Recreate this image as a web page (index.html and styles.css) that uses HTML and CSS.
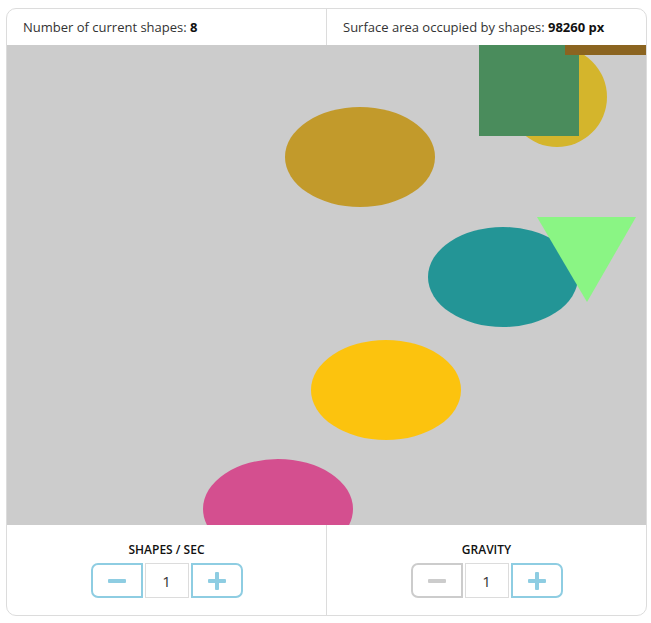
FILE: index.html
```html
<!DOCTYPE html>
<html>
<head>
<meta charset="utf-8">
<link rel="stylesheet" href="styles.css">
</head>
<body>
<div class="app">
  <div class="header">
    <div class="cell"><span>Number of current shapes: <b>8</b></span></div>
    <div class="cell"><span>Surface area occupied by shapes: <b>98260 px</b></span></div>
  </div>
  <div class="canvas">
    <svg width="640" height="480" viewBox="0 0 640 480">
      <rect width="640" height="480" fill="#cccccc"/>
      <circle cx="550" cy="52" r="50" fill="#d4b52c"/>
      <rect x="472" y="-9" width="100" height="100" fill="#4a8c5c"/>
      <rect x="558" y="0" width="82" height="10" fill="#8b6420"/>
      <ellipse cx="353" cy="112" rx="75" ry="50" fill="#c29a2b"/>
      <ellipse cx="496" cy="232" rx="75" ry="50" fill="#239596"/>
      <polygon points="530,172 629,172 580,257" fill="#8af584"/>
      <ellipse cx="379" cy="345" rx="75" ry="50" fill="#fcc30e"/>
      <ellipse cx="271" cy="464" rx="75" ry="50" fill="#d44f8f"/>
    </svg>
  </div>
  <div class="footer">
    <div class="control">
      <div class="label">SHAPES / SEC</div>
      <div class="stepper">
        <button class="btn minus"><span class="bar"></span></button>
        <div class="value">1</div>
        <button class="btn plus"><span class="bar"></span><span class="bar vert"></span></button>
      </div>
    </div>
    <div class="control">
      <div class="label">GRAVITY</div>
      <div class="stepper">
        <button class="btn minus disabled"><span class="bar"></span></button>
        <div class="value">1</div>
        <button class="btn plus"><span class="bar"></span><span class="bar vert"></span></button>
      </div>
    </div>
  </div>
</div>
</body>
</html>
```
FILE: styles.css
```css
* { box-sizing: border-box; }
body {
  margin: 0;
  padding: 8px 5px 0 6px;
  background: #fff;
  font-family: "Open Sans", "DejaVu Sans", sans-serif;
  color: #222;
}
.app {
  width: 641px;
  border: 1px solid #dcdcdc;
  border-radius: 10px;
  overflow: hidden;
}
.header {
  display: grid;
  grid-template-columns: 320px 1fr;
  height: 36px;
}
.header .cell {
  display: flex;
  align-items: center;
  padding-left: 16px;
  font-size: 13px;
  color: #333;
}
.header .cell:first-child { border-right: 1px solid #dcdcdc; }
.header b { color: #111; font-weight: 700; }
.canvas {
  height: 480px;
  line-height: 0;
}
.canvas svg { display: block; }
.footer {
  display: grid;
  grid-template-columns: 320px 1fr;
  height: 90px;
}
.control {
  display: flex;
  flex-direction: column;
  align-items: center;
  padding-top: 17px;
}
.control:first-child { border-right: 1px solid #dcdcdc; }
.label {
  font-size: 12px;
  font-weight: 600;
  color: #111;
  line-height: 16px;
  margin-bottom: 5px;
}
.stepper {
  display: flex;
  gap: 2px;
  height: 35px;
}
.btn {
  width: 52px;
  height: 35px;
  border: 2px solid #8ecde2;
  background: #fff;
  padding: 0;
  position: relative;
}
.btn.minus { border-radius: 7px 0 0 7px; }
.btn.plus { border-radius: 0 7px 7px 0; }
.btn.disabled { border-color: #cccccc; }
.bar {
  position: absolute;
  left: 50%;
  top: 50%;
  width: 18px;
  height: 4px;
  margin: -2px 0 0 -9px;
  background: #8ecde2;
  border-radius: 1px;
}
.bar.vert {
  width: 4px;
  height: 18px;
  margin: -9px 0 0 -2px;
}
.disabled .bar { background: #cccccc; }
.value {
  width: 44px;
  height: 35px;
  border: 1px solid #dcdcdc;
  display: flex;
  align-items: center;
  justify-content: center;
  font-size: 15px;
  color: #333;
}
```
